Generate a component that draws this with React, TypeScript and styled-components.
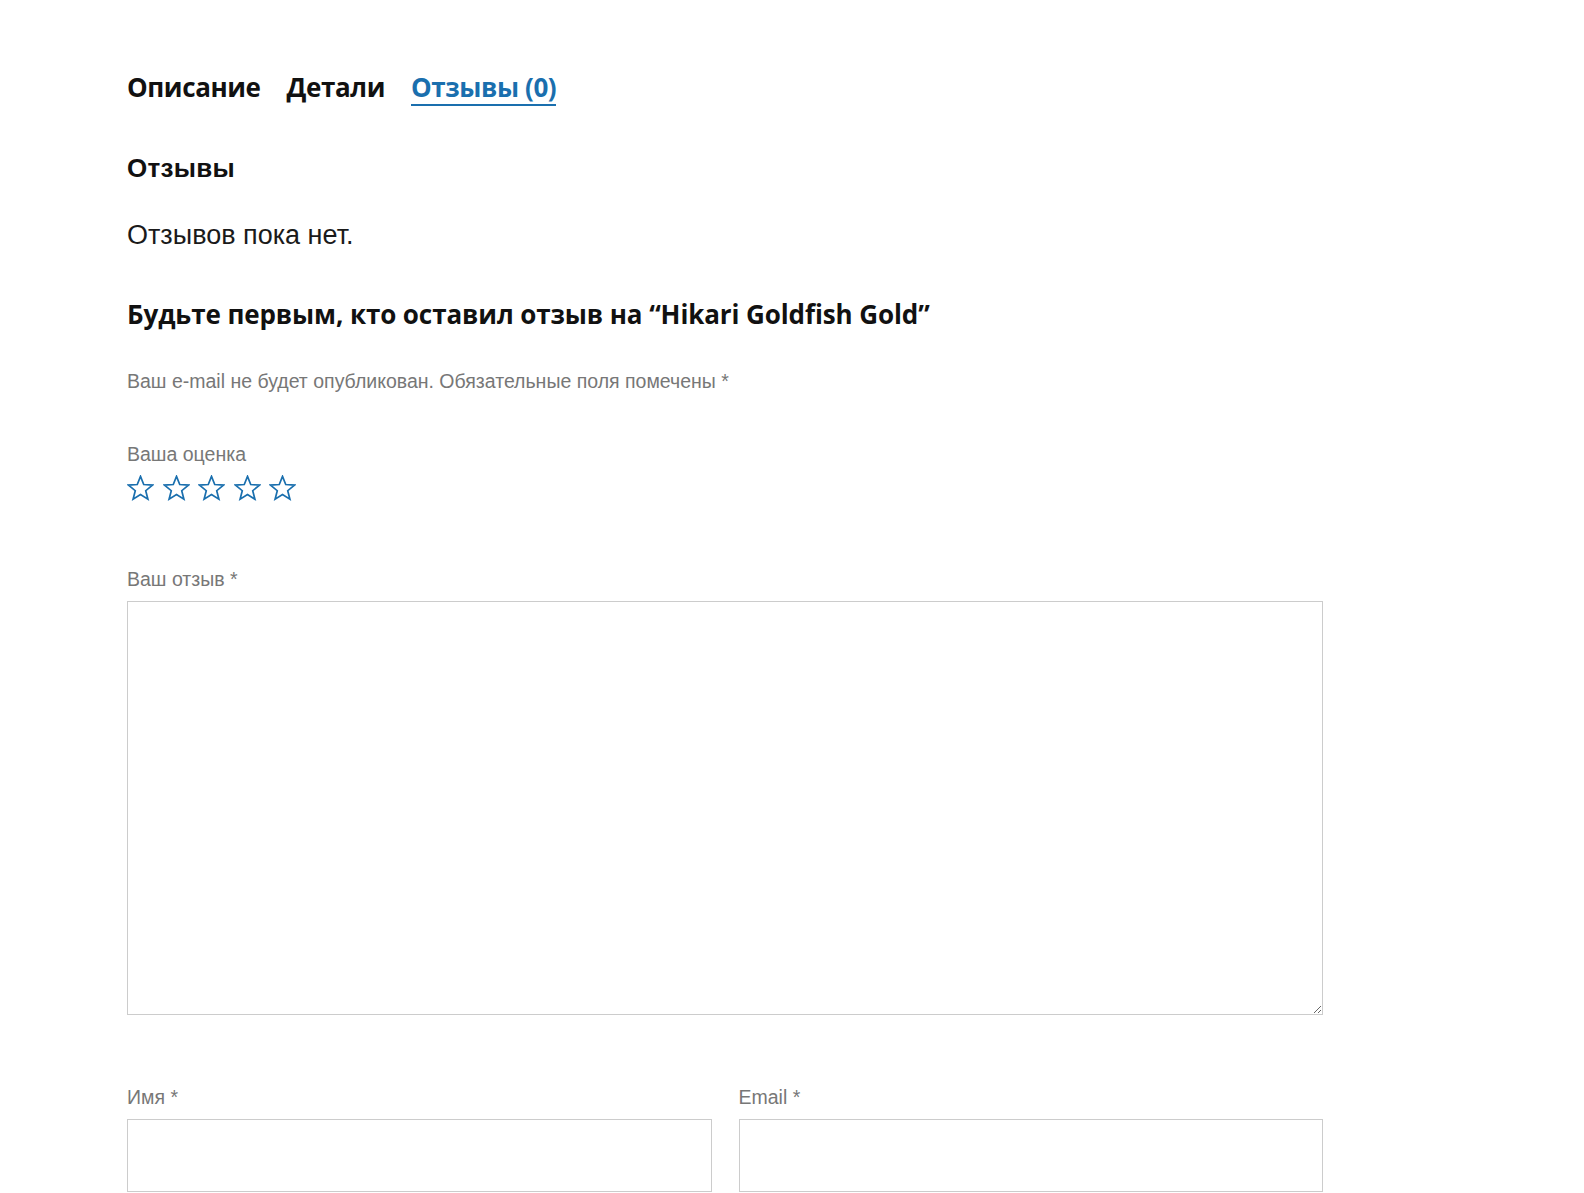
import styled, { createGlobalStyle } from "styled-components";

const GlobalStyle = createGlobalStyle`
  body {
    margin: 0;
    background: #fff;
    font-family: "Liberation Sans", Arial, sans-serif;
  }
`;

const tabs = [
  { label: "Описание", active: false },
  { label: "Детали", active: false },
  { label: "Отзывы (0)", active: true },
];

function StarIcon() {
  const cx = 13.5;
  const cy = 14;
  const outer = 12.6;
  const inner = 5.5;
  const points: string[] = [];
  for (let i = 0; i < 10; i++) {
    const r = i % 2 === 0 ? outer : inner;
    const a = ((-90 + i * 36) * Math.PI) / 180;
    points.push(`${(cx + r * Math.cos(a)).toFixed(2)},${(cy + r * Math.sin(a)).toFixed(2)}`);
  }
  return (
    <svg width="27" height="27" viewBox="0 0 27 27">
      <polygon
        points={points.join(" ")}
        fill="none"
        stroke="#1a6fae"
        strokeWidth="1.7"
        strokeLinejoin="miter"
      />
    </svg>
  );
}

export default function App() {
  return (
    <>
      <GlobalStyle />
      <Page>
        <Tabs>
          {tabs.map((tab) => (
            <Tab key={tab.label} $active={tab.active}>
              {tab.label}
            </Tab>
          ))}
        </Tabs>

        <Title>Отзывы</Title>
        <Empty>Отзывов пока нет.</Empty>

        <ReplyTitle>Будьте первым, кто оставил отзыв на “Hikari Goldfish Gold”</ReplyTitle>
        <Note>Ваш e-mail не будет опубликован. Обязательные поля помечены *</Note>

        <RatingBlock>
          <Label>Ваша оценка</Label>
          <Stars>
            {[1, 2, 3, 4, 5].map((n) => (
              <StarButton key={n} aria-label={`${n} из 5`}>
                <StarIcon />
              </StarButton>
            ))}
          </Stars>
        </RatingBlock>

        <Field>
          <Label>Ваш отзыв *</Label>
          <TextArea />
        </Field>

        <Row>
          <Field>
            <Label>Имя *</Label>
            <Input type="text" />
          </Field>
          <Field>
            <Label>Email *</Label>
            <Input type="email" />
          </Field>
        </Row>
      </Page>
    </>
  );
}

const Page = styled.div`
  width: 1196px;
  padding: 70px 0 40px 127px;
  display: flex;
  flex-direction: column;
`;

const Tabs = styled.ul`
  margin: 0;
  padding: 0;
  list-style: none;
  display: flex;
  gap: 26px;
`;

const Tab = styled.li<{ $active: boolean }>`
  font-family: "Open Sans", "Noto Sans", sans-serif;
  font-weight: 700;
  font-size: 26px;
  line-height: 34px;
  letter-spacing: -0.4px;
  color: ${(p) => (p.$active ? "#1a6fae" : "#111")};
  border-bottom: 2px solid ${(p) => (p.$active ? "#1a6fae" : "transparent")};
  cursor: pointer;
`;

const Title = styled.h2`
  margin: 47px 0 0;
  font-size: 26px;
  line-height: 30px;
  font-weight: 700;
  letter-spacing: 0.3px;
  color: #111;
`;

const Empty = styled.p`
  margin: 37px 0 0;
  font-size: 27px;
  line-height: 30px;
  color: #1a1a1a;
`;

const ReplyTitle = styled.h3`
  margin: 46px 0 0;
  font-family: "Open Sans", "Noto Sans", sans-serif;
  font-weight: 700;
  font-size: 26px;
  line-height: 36px;
  letter-spacing: -0.1px;
  color: #111;
`;

const Note = styled.p`
  margin: 37px 0 0;
  font-size: 19.5px;
  line-height: 24px;
  color: #777;
`;

const RatingBlock = styled.div`
  margin-top: 49px;
  display: flex;
  flex-direction: column;
  gap: 9px;
`;

const Label = styled.label`
  display: block;
  font-size: 19.5px;
  line-height: 24px;
  color: #777;
`;

const Stars = styled.div`
  display: flex;
  gap: 8.5px;
`;

const StarButton = styled.span`
  display: block;
  width: 27px;
  height: 27px;
  cursor: pointer;
`;

const Field = styled.div`
  display: flex;
  flex-direction: column;
  gap: 10px;
  margin-top: 65px;
`;

const TextArea = styled.textarea`
  box-sizing: border-box;
  width: 1196px;
  height: 414px;
  border: 1px solid #ccc;
  border-radius: 0;
  padding: 10px;
  font-family: "Liberation Sans", Arial, sans-serif;
  font-size: 16px;
  outline: none;
`;

const Row = styled.div`
  display: grid;
  grid-template-columns: 1fr 1fr;
  column-gap: 27px;
  margin-top: 5px;
`;

const Input = styled.input`
  box-sizing: border-box;
  width: 100%;
  height: 73px;
  border: 1px solid #ccc;
  border-radius: 0;
  padding: 0 12px;
  font-family: "Liberation Sans", Arial, sans-serif;
  font-size: 16px;
  outline: none;
`;
